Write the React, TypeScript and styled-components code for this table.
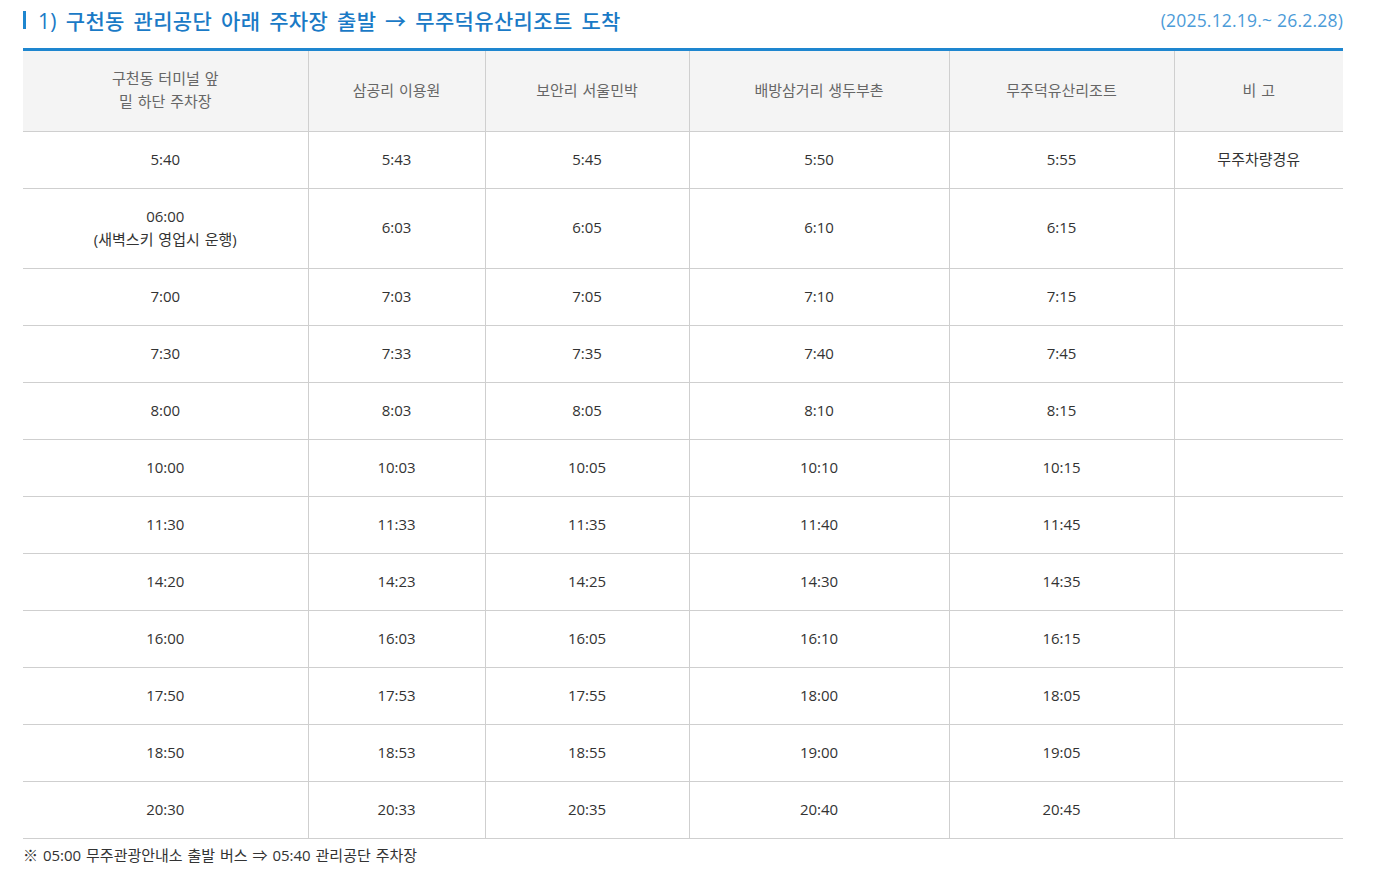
import React from "react";
import styled, { createGlobalStyle } from "styled-components";

const GlobalStyle = createGlobalStyle`
  html, body {
    margin: 0;
    padding: 0;
    background: #fff;
  }
  body {
    font-family: "Open Sans", "Noto Sans CJK KR", sans-serif;
    color: #333;
  }
`;

const Page = styled.div`
  width: 1320px;
  padding: 5px 0 0 23px;
`;

const TitleBar = styled.div`
  display: flex;
  align-items: center;
  justify-content: space-between;
  height: 30px;
  margin-bottom: 13px;
`;

const Title = styled.h3`
  margin: 0;
  display: flex;
  align-items: center;
  gap: 12px;
  font-size: 21px;
  font-weight: 500;
  letter-spacing: 0.35px;
  word-spacing: 3px;
  color: #1a7ac6;

  &::before {
    content: "";
    display: block;
    width: 3px;
    height: 18px;
    background: #1e86cf;
  }
`;

const Period = styled.span`
  font-size: 17.5px;
  color: #4b9bd8;
  letter-spacing: 0.2px;
`;

const Table = styled.table`
  width: 100%;
  border-collapse: collapse;
  table-layout: fixed;
  border-top: 3px solid #1e86cf;
`;

const HeadCell = styled.th`
  height: 78px;
  padding: 0 0 2px;
  background: #f4f4f4;
  color: #666;
  font-size: 15px;
  font-weight: 400;
  line-height: 23px;
  word-spacing: 1px;
  border-right: 1px solid #cfcfcf;
  border-bottom: 1px solid #cfcfcf;
  &:last-child {
    border-right: none;
  }
`;

const Cell = styled.td<{ $tall?: boolean }>`
  height: ${({ $tall }) => ($tall ? 77 : 54)}px;
  padding: 0 0 2px;
  text-align: center;
  color: #333;
  font-size: 15px;
  line-height: 23px;
  word-spacing: 1px;
  border-right: 1px solid #cfcfcf;
  border-bottom: 1px solid #cfcfcf;
  &:last-child {
    border-right: none;
  }
`;

const Note = styled.p`
  margin: 5px 0 0;
  font-size: 15px;
  color: #333;
  word-spacing: 1px;
`;

const widths = [285, 177, 204, 260, 225, 169];

const headers: React.ReactNode[] = [
  <>
    구천동 터미널 앞
    <br />
    밑 하단 주차장
  </>,
  "삼공리 이용원",
  "보안리 서울민박",
  "배방삼거리 생두부촌",
  "무주덕유산리조트",
  "비 고",
];

const rows: { cells: React.ReactNode[]; tall?: boolean }[] = [
  { cells: ["5:40", "5:43", "5:45", "5:50", "5:55", "무주차량경유"] },
  {
    cells: [
      <>
        06:00
        <br />
        (새벽스키 영업시 운행)
      </>,
      "6:03",
      "6:05",
      "6:10",
      "6:15",
      "",
    ],
    tall: true,
  },
  { cells: ["7:00", "7:03", "7:05", "7:10", "7:15", ""] },
  { cells: ["7:30", "7:33", "7:35", "7:40", "7:45", ""] },
  { cells: ["8:00", "8:03", "8:05", "8:10", "8:15", ""] },
  { cells: ["10:00", "10:03", "10:05", "10:10", "10:15", ""] },
  { cells: ["11:30", "11:33", "11:35", "11:40", "11:45", ""] },
  { cells: ["14:20", "14:23", "14:25", "14:30", "14:35", ""] },
  { cells: ["16:00", "16:03", "16:05", "16:10", "16:15", ""] },
  { cells: ["17:50", "17:53", "17:55", "18:00", "18:05", ""] },
  { cells: ["18:50", "18:53", "18:55", "19:00", "19:05", ""] },
  { cells: ["20:30", "20:33", "20:35", "20:40", "20:45", ""] },
];

export default function App() {
  return (
    <>
      <GlobalStyle />
      <Page>
        <TitleBar>
          <Title>1) 구천동 관리공단 아래 주차장 출발 → 무주덕유산리조트 도착</Title>
          <Period>(2025.12.19.~ 26.2.28)</Period>
        </TitleBar>
        <Table>
          <colgroup>
            {widths.map((w, i) => (
              <col key={i} style={{ width: w }} />
            ))}
          </colgroup>
          <thead>
            <tr>
              {headers.map((h, i) => (
                <HeadCell key={i}>{h}</HeadCell>
              ))}
            </tr>
          </thead>
          <tbody>
            {rows.map((r, i) => (
              <tr key={i}>
                {r.cells.map((c, j) => (
                  <Cell key={j} $tall={r.tall}>
                    {c}
                  </Cell>
                ))}
              </tr>
            ))}
          </tbody>
        </Table>
        <Note>※ 05:00 무주관광안내소 출발 버스 ⇒ 05:40 관리공단 주차장</Note>
      </Page>
    </>
  );
}
